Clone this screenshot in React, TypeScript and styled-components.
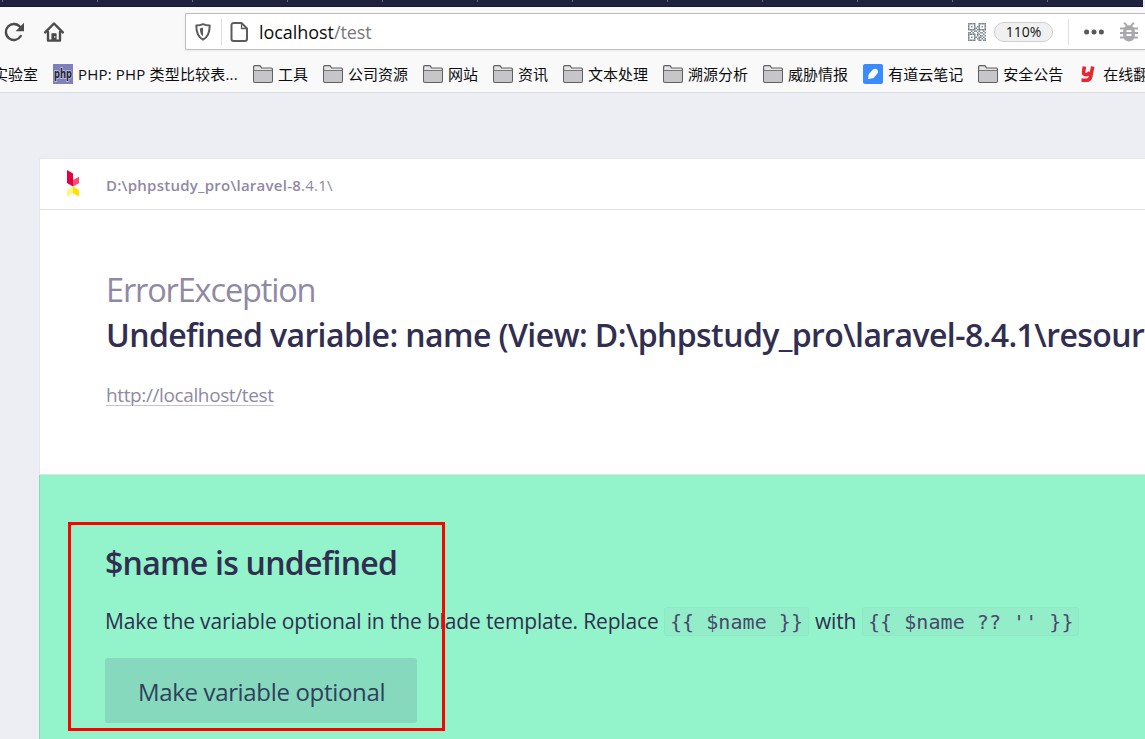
import React from 'react';
import styled, { createGlobalStyle } from 'styled-components';

const Global = createGlobalStyle`
  * { box-sizing: border-box; }
  body { margin: 0; background: #edeef4; }
  #root { width: 1145px; height: 739px; overflow: hidden; }
`;

const sans = "'Open Sans', 'Noto Sans', 'Noto Sans CJK SC', sans-serif";

const Page = styled.div`
  width: 1145px;
  height: 739px;
  overflow: hidden;
  display: flex;
  flex-direction: column;
  background: #edeef4;
  font-family: ${sans};
  white-space: nowrap;
`;

const TabStrip = styled.div`
  flex: none;
  width: 1143px;
  height: 7px;
  display: flex;
  padding-left: 2px;
  background: #20213f;
  border-bottom: 1px solid #15163a;
  overflow: hidden;
`;

const TabTick = styled.div`
  flex: none;
  width: 95px;
  height: 2px;
  border-left: 1px solid #6b6c82;
`;

const Chrome = styled.header`
  flex: none;
  height: 86px;
  background: #f9f9fa;
  border-bottom: 1px solid #dcdcde;
`;

const NavBar = styled.div`
  display: flex;
  align-items: center;
  height: 50px;
  padding-left: 4px;
`;

const NavButtons = styled.div`
  display: flex;
  gap: 20px;
  width: 181px;
`;

const UrlBar = styled.div`
  flex: 1;
  min-width: 0;
  height: 37px;
  margin-top: -1px;
  display: flex;
  align-items: center;
  padding-left: 8px;
  background: #fff;
  border: 1px solid #bdbdbf;
  border-right: 0;
  border-radius: 2px 0 0 2px;
  box-shadow: 0 1px 3px rgba(0, 0, 0, 0.06);
  overflow: hidden;
  svg { flex: none; }
`;

const Separator = styled.i<{ $left: number; $right: number }>`
  flex: none;
  width: 1px;
  height: 26px;
  margin: 0 ${p => p.$right}px 0 ${p => p.$left}px;
  background: #dedee0;
`;

const Address = styled.div`
  flex: none;
  width: 720px;
  padding-left: 11px;
  font-size: 18px;
  line-height: 26px;
  letter-spacing: -0.06px;
  color: #0c0c0d;
  span { color: #77777a; }
`;

const ZoomPill = styled.div`
  flex: none;
  width: 59px;
  height: 20px;
  margin-left: 8px;
  border: 1px solid #cfcfd1;
  border-radius: 10px;
  background: #f0f0f1;
  font-size: 14px;
  line-height: 18px;
  text-align: center;
  color: #111;
`;

const Bookmarks = styled.nav`
  display: flex;
  align-items: center;
  gap: 15px;
  height: 34px;
  margin-left: -7px;
  overflow: hidden;
`;

const Bookmark = styled.div<{ $width?: number; $tracking?: number }>`
  flex: none;
  display: flex;
  align-items: center;
  gap: 5px;
  width: ${p => (p.$width ? `${p.$width}px` : 'auto')};
  font-size: 15px;
  line-height: 22px;
  letter-spacing: ${p => p.$tracking ?? 0}px;
  color: #0c0c0d;
  svg { flex: none; }
`;

const Card = styled.main`
  flex: 1;
  margin: 65px 0 0 39px;
  display: flex;
  flex-direction: column;
  background: #fff;
  border-top: 1px solid #e4e5ef;
  border-left: 1px solid #e4e5ef;
  border-radius: 2px 0 0 0;
`;

const CardHeader = styled.div`
  flex: none;
  height: 51px;
  display: flex;
  align-items: center;
  padding-left: 26px;
  border-bottom: 1px solid #e0e0ec;
`;

const Logo = styled.svg`
  flex: none;
  margin-top: -2px;
`;

const ProjectPath = styled.div`
  margin-left: 26px;
  padding-top: 2px;
  font-size: 15px;
  line-height: 20px;
  letter-spacing: 0.25px;
  color: #8f89a5;
  b { font-weight: 600; }
`;

const Exception = styled.section`
  flex: none;
  height: 265px;
  padding: 57px 0 0 66px;
  border-bottom: 1px solid #dfe3ea;
  overflow: hidden;
`;

const ExceptionClass = styled.div`
  font-size: 32.5px;
  line-height: 45px;
  letter-spacing: -1.15px;
  color: #8f89a5;
`;

const Title = styled.h1`
  margin: 0;
  font-size: 32px;
  line-height: 45px;
  font-weight: 600;
  letter-spacing: -0.6px;
  color: #312e51;
`;

const Url = styled.a`
  display: inline-block;
  margin-top: 23px;
  font-size: 19px;
  line-height: 30px;
  letter-spacing: -0.38px;
  color: #8f89a5;
  text-decoration: underline;
  text-decoration-color: #c5c2d8;
  text-decoration-thickness: 1px;
  text-underline-offset: 3px;
`;

const Solution = styled.section`
  flex: 1;
  margin-left: -1px;
  padding: 65px 0 0 65px;
  background: #93f3ca;
  border-left: 1px solid #83dcbb;
`;

const SolutionTitle = styled.h2`
  margin: 0;
  font-size: 32px;
  line-height: 46px;
  font-weight: 600;
  letter-spacing: -0.74px;
  color: #312e51;
`;

const Description = styled.p`
  margin: 18px 0 0;
  display: flex;
  align-items: center;
  font-size: 21px;
  line-height: 34px;
  letter-spacing: -0.15px;
  color: #312e51;
`;

const Sentence = styled.span<{ $width: number; $inset?: number }>`
  flex: none;
  width: ${p => p.$width}px;
  padding-left: ${p => p.$inset ?? 0}px;
`;

const Code = styled.code<{ $width: number }>`
  flex: none;
  width: ${p => p.$width}px;
  height: 29px;
  padding-left: 5px;
  border: 1px solid #8de8c5;
  border-radius: 3px;
  background: #92edc8;
  font-family: 'DejaVu Sans Mono', monospace;
  font-size: 20px;
  line-height: 28px;
  letter-spacing: 0.05px;
  white-space: pre;
  color: #4b476d;
`;

const FixButton = styled.button`
  display: block;
  width: 312px;
  height: 65px;
  margin: 20px 0 0;
  padding: 3px 0 0 1px;
  border: 0;
  border-radius: 3px;
  background: #86d9bc;
  font-family: ${sans};
  font-size: 24px;
  line-height: 34px;
  letter-spacing: -0.33px;
  color: #313e5d;
`;

const Highlight = styled.div`
  position: absolute;
  left: 68px;
  top: 522px;
  width: 377px;
  height: 209px;
  border: 3px solid #fe0000;
  pointer-events: none;
`;

const Reload = () => (
  <svg width="20" height="20" viewBox="0 0 20 20" fill="none" stroke="#4b4b4d" strokeWidth="2.4">
    <path d="M16.8 14A8 8 0 1 1 16 4.800" strokeLinecap="round" />
    <path d="M20 .8v8.400h-8.400z" fill="#4b4b4d" stroke="none" />
  </svg>
);

const Home = () => (
  <svg width="20" height="20" viewBox="0 0 20 20" fill="none" stroke="#4b4b4d" strokeLinejoin="round" strokeLinecap="round">
    <path d="M1.2 10.400 10 1.500l8.800 8.900" strokeWidth="2.400" />
    <path d="M4 10v8.600h12V10" strokeWidth="2.400" />
    <path d="M8 18v-6.200h4V18z" fill="#4b4b4d" strokeWidth="1.200" />
    <path d="M10.800 14.400v1" stroke="#f9f9fa" strokeWidth="1" />
  </svg>
);

const Shield = () => (
  <svg width="18" height="18" viewBox="0 0 18 18">
    <path d="M9 1.200c2 1 4.400 1.300 6.700 1.300 0 6.200-1 11.300-6.700 14.200C3.300 13.800 2.300 8.700 2.300 2.500 4.600 2.500 7 2.200 9 1.200z" fill="none" stroke="#5c5c5e" strokeWidth="2" strokeLinejoin="round" />
    <path d="M9 4.600v8.700C6.700 11.600 6 9 5.800 5.400 7 5.300 8 5.100 9 4.600z" fill="#5c5c5e" />
  </svg>
);

const Doc = () => (
  <svg width="18" height="20" viewBox="0 0 18 20" fill="none" stroke="#5c5c5e" strokeWidth="2" strokeLinejoin="round">
    <path d="M3.500 1h8L17 6.500V17a2 2 0 0 1-2 2H3.500a2 2 0 0 1-2-2V3a2 2 0 0 1 2-2z" />
    <path d="M11.500 1.500v5H17" strokeWidth="1.300" />
  </svg>
);

const qrRows = [
  '111110011111',
  '100010010001',
  '101010110101',
  '100011010001',
  '111110111111',
  '001011010010',
  '110100101101',
  '111110110010',
  '100010101101',
  '101011011010',
  '100010110101',
  '111110011011',
];

const Qr = () => (
  <svg width="18" height="18" viewBox="0 0 12 12">
    {qrRows.flatMap((row, y) =>
      row.split('').map((c, x) => (c === '1' ? <rect key={`${x}-${y}`} x={x} y={y} width="1" height="1" fill="#7d8691" /> : null)),
    )}
  </svg>
);

const Dots = () => (
  <svg width="20" height="6" viewBox="0 0 20 6" fill="#58585a">
    <circle cx="2.600" cy="3" r="2.500" />
    <circle cx="10" cy="3" r="2.500" />
    <circle cx="17.400" cy="3" r="2.500" />
  </svg>
);

const BugSvg = styled.svg`
  margin-left: 16px;
`;

const Bug = () => (
  <BugSvg width="18" height="20" viewBox="0 0 18 20">
    <path d="M4.200 .7l3 3.500M13.800 .7l-3 3.500M0 6.500h18M0 11h18M0 15.500h18" stroke="#a9a9ab" strokeWidth="2" />
    <rect x="3.200" y="3.200" width="11.600" height="16.300" rx="5.600" fill="#a9a9ab" />
    <path d="M6.500 9.200h5M6.500 13h5" stroke="#fff" strokeWidth="1.800" />
  </BugSvg>
);

const Folder = () => (
  <svg width="20" height="18" viewBox="0 0 20 18">
    <path d="M.6 15.900V1.900Q.6.700 1.800.700h4.600q.8 0 1.200.700l1 1.600h9.600q1.200 0 1.200 1.200v11.700q0 1.400-1.200 1.400H1.800q-1.200 0-1.200-1.400z" fill="#e3e3e4" stroke="#606062" strokeWidth="1.200" />
    <path d="M1.200 6h17.600v10q0 .7-.6.700H1.800q-.6 0-.6-.7z" fill="#c6c6c8" />
    <path d="M1 5.500h18" stroke="#77777a" />
  </svg>
);

const PhpLogo = () => (
  <svg width="20" height="20" viewBox="0 0 20 20">
    <rect width="20" height="20" fill="#7f7fbd" />
    <text x="10" y="13.500" textAnchor="middle" textLength="18" lengthAdjust="spacingAndGlyphs" fontFamily="Open Sans, sans-serif" fontSize="12" fontWeight="700" letterSpacing="0" fill="#232333" stroke="#c5c5df" strokeWidth="1.600" paintOrder="stroke">php</text>
  </svg>
);

const NoteLogo = () => (
  <svg width="20" height="20" viewBox="0 0 20 20">
    <rect width="20" height="20" rx="2" fill="#398bff" />
    <path d="M5.200 15l.3-3.800q.1-1 .8-1.700l3.200-3.600q1.300-1.300 2.900-1.200 2 .2 2.600 2.200.3 1.500-.7 2.700l-3.300 3.800q-.7.8-1.700.9z" fill="#fff" />
  </svg>
);

const YLogo = () => (
  <svg width="20" height="20" viewBox="0 0 20 20" fill="none" stroke="#ea2430" strokeWidth="3.600">
    <path d="M6.400 2.500 5.600 7.800q-.4 2.900 2.200 2.900 2.600 0 4-2.600M14.700 2.500l-2 10.200q-.7 3.600-4.200 3.600H3.500" />
  </svg>
);

const folderNames = ['工具', '公司资源', '网站', '资讯', '文本处理', '溯源分析', '威胁情报'];

export default function App() {
  return (
    <Page>
      <Global />
      <TabStrip>
        {Array.from({ length: 12 }, (_, i) => (
          <TabTick key={i} />
        ))}
      </TabStrip>
      <Chrome>
        <NavBar>
          <NavButtons>
            <Reload />
            <Home />
          </NavButtons>
          <UrlBar>
            <Shield />
            <Separator $left={9} $right={8} />
            <Doc />
            <Address>
              localhost<span>/test</span>
            </Address>
            <Qr />
            <ZoomPill>110%</ZoomPill>
            <Separator $left={15} $right={15} />
            <Dots />
            <Bug />
          </UrlBar>
        </NavBar>
        <Bookmarks>
          <Bookmark>实验室</Bookmark>
          <Bookmark $width={185} $tracking={0.18}>
            <PhpLogo />
            PHP: PHP 类型比较表...
          </Bookmark>
          {folderNames.map(name => (
            <Bookmark key={name}>
              <Folder />
              {name}
            </Bookmark>
          ))}
          <Bookmark>
            <NoteLogo />
            有道云笔记
          </Bookmark>
          <Bookmark>
            <Folder />
            安全公告
          </Bookmark>
          <Bookmark>
            <YLogo />
            在线翻
          </Bookmark>
        </Bookmarks>
      </Chrome>
      <Card>
        <CardHeader>
          <Logo width="14" height="28" viewBox="0 0 14 28">
            <path d="M1 1l6 3.500v13L1 14z" fill="#e5003d" />
            <path d="M7 11l6-3.300v6.500l-6 3.300z" fill="#ff4775" />
            <path d="M1 21l6-3.500v6.700L1 27.500z" fill="#fff382" />
            <path d="M7 17.500l6 3.500v6.500l-6-3.300z" fill="#ffe100" />
          </Logo>
          <ProjectPath>
            <b>D:\phpstudy_pro\laravel-8</b>.4.1\
          </ProjectPath>
        </CardHeader>
        <Exception>
          <ExceptionClass>ErrorException</ExceptionClass>
          <Title>Undefined variable: name (View: D:\phpstudy_pro\laravel-8.4.1\resources</Title>
          <Url>http://localhost/test</Url>
        </Exception>
        <Solution>
          <SolutionTitle>$name is undefined</SolutionTitle>
          <Description>
            <Sentence $width={559}>Make the variable optional in the blade template. Replace</Sentence>
            <Code $width={145}>{'{{ $name }}'}</Code>
            <Sentence $width={53} $inset={6}>with</Sentence>
            <Code $width={217}>{"{{ $name ?? '' }}"}</Code>
          </Description>
          <FixButton>Make variable optional</FixButton>
        </Solution>
      </Card>
      <Highlight />
    </Page>
  );
}
